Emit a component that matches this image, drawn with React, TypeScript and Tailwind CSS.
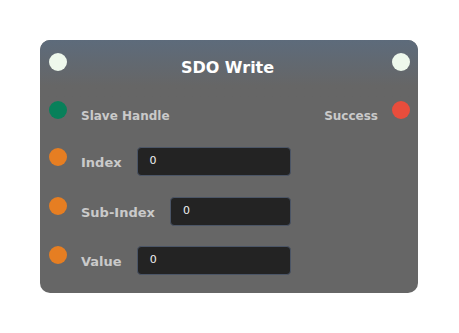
import React from 'react';

const font = { fontFamily: '"DejaVu Sans", Verdana, sans-serif' };

const Dot = ({ color }: { color: string }) => (
  <div className={`w-[18px] h-[18px] rounded-full shrink-0 ${color}`} />
);

const Field = ({ label }: { label: string }) => (
  <div className="flex items-center h-[29px] w-[210px] gap-[15px]">
    <span className="text-[13px] font-bold text-[#cacaca] whitespace-nowrap mt-[2px]">{label}</span>
    <div className="flex-1 h-[29px] flex items-center rounded-[4px] border border-[#4b5566] bg-[#232323] px-[12px] text-[11px] text-[#f0f0f0]">
      0
    </div>
  </div>
);

export default function App() {
  return (
    <div className="w-[459px] h-[333px] bg-white pt-[40px] pl-[40px]" style={font}>
      <div className="w-[378px] h-[253px] rounded-[10px] bg-[#666666] overflow-hidden">
        <div className="h-[61px] bg-gradient-to-b from-[#5d6b7b] to-[#666666] to-[75%] flex items-start justify-between pl-[9px] pt-[13px] pr-[8px]">
          <Dot color="bg-[#eef8ec]" />
          <span className="text-[16px] font-bold text-white leading-none mt-[7px] mr-[4px]">SDO Write</span>
          <Dot color="bg-[#eef8ec]" />
        </div>

        <div className="flex items-start pl-[9px] pr-[8px]">
          <Dot color="bg-[#08805a]" />
          <div className="flex items-center h-[29px] ml-[14px] flex-1">
            <span className="text-[12px] font-bold text-[#cacaca]">Slave Handle</span>
          </div>
          <div className="flex items-center h-[29px] mr-[14px]">
            <span className="text-[12px] font-bold text-[#cacaca]">Success</span>
          </div>
          <Dot color="bg-[#e84d3c]" />
        </div>

        <div className="flex items-start pl-[9px] mt-[17px]">
          <div className="mt-[1px]"><Dot color="bg-[#e67e22]" /></div>
          <div className="ml-[14px]"><Field label="Index" /></div>
        </div>

        <div className="flex items-start pl-[9px] mt-[21px]">
          <Dot color="bg-[#e67e22]" />
          <div className="ml-[14px]"><Field label="Sub-Index" /></div>
        </div>

        <div className="flex items-start pl-[9px] mt-[20px]">
          <Dot color="bg-[#e67e22]" />
          <div className="ml-[14px]"><Field label="Value" /></div>
        </div>
      </div>
    </div>
  );
}
